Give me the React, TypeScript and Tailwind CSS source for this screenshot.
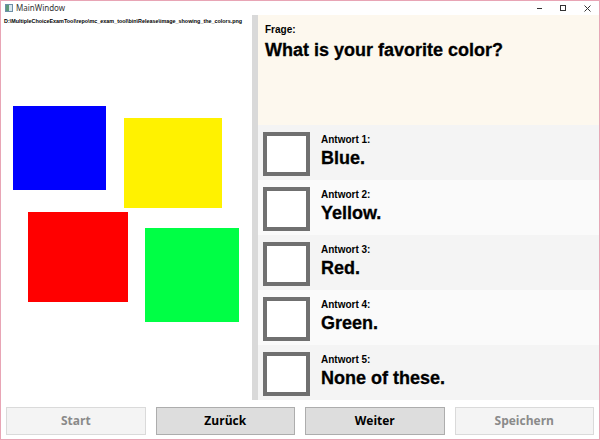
import React from "react";

const answers = ["Blue.", "Yellow.", "Red.", "Green.", "None of these."];

function ColorImage() {
  // the loaded picture: four coloured squares on white
  return (
    <svg width="251" height="330" viewBox="0 0 251 330" className="block">
      <rect x="12" y="76" width="93" height="84" fill="#0000ff" />
      <rect x="123" y="88" width="98" height="90" fill="#fff200" />
      <rect x="27" y="182" width="100" height="90" fill="#ff0000" />
      <rect x="144" y="198" width="94" height="94" fill="#00ff45" />
    </svg>
  );
}

export default function App() {
  return (
    <div
      className="w-[600px] h-[440px] border border-[#e8a5b5] bg-white flex flex-col overflow-hidden"
      style={{ fontFamily: '"Liberation Sans", Arial, sans-serif' }}
    >
      {/* Title bar */}
      <div className="h-[14px] flex items-center justify-between bg-white">
        <div className="flex items-center gap-[3px] pl-[4px]">
          <div className="w-[8px] h-[8px] border border-[#6d8fa8] bg-[#d8e6ee] flex">
            <div className="w-[3px] h-full bg-[#5d9a7a]" />
          </div>
          <span className="text-[8px] text-[#333]" style={{ fontFamily: '"Noto Sans", sans-serif' }}>
            MainWindow
          </span>
        </div>
        <div className="flex items-center h-full">
          <div className="w-[24px] h-full flex items-center justify-center">
            <div className="w-[5px] h-px bg-[#333]" />
          </div>
          <div className="w-[24px] h-full flex items-center justify-center">
            <div className="w-[6px] h-[6px] border border-[#333]" />
          </div>
          <div className="w-[24px] h-full flex items-center justify-center">
            <svg width="7" height="7" viewBox="0 0 7 7">
              <path d="M0.5 0.5 L6.5 6.5 M6.5 0.5 L0.5 6.5" stroke="#333" strokeWidth="1" />
            </svg>
          </div>
        </div>
      </div>

      {/* Main area */}
      <div className="h-[385px] flex">
        <div className="w-[251px] flex flex-col">
          <div className="h-[15px] pl-[3px] pt-[4px] text-[5.4px] font-bold leading-none text-black whitespace-nowrap">
            D:\MultipleChoiceExamTool\repo\mc_exam_tool\bin\Release\image_showing_the_colors.png
          </div>
          <ColorImage />
        </div>
        <div className="w-[6px] bg-[#d9d9d9]" />
        <div className="flex-1 flex flex-col">
          <div className="h-[110px] bg-[#fdf8ee] px-[7px] pt-[10px]">
            <div className="text-[10px] font-bold leading-none text-black">Frage:</div>
            <div className="mt-[6px] text-[18px] font-bold leading-none text-black [-webkit-text-stroke:0.3px_black]">
              What is your favorite color?
            </div>
          </div>
          {answers.map((a, i) => (
            <div
              key={i}
              className={`h-[55px] flex items-start gap-[11px] pl-[5px] pt-[7px] ${
                i % 2 === 0 ? "bg-[#f4f4f4]" : "bg-[#fafafa]"
              }`}
            >
              <div className="w-[47px] h-[44px] border-[4px] border-[#707070] bg-white shrink-0" />
              <div className="flex flex-col pt-[3px]">
                <span className="text-[10px] font-bold leading-none text-black">Antwort {i + 1}:</span>
                <span className="mt-[4px] text-[18px] font-bold leading-none text-black [-webkit-text-stroke:0.3px_black]">
                  {a}
                </span>
              </div>
            </div>
          ))}
        </div>
      </div>

      {/* Buttons */}
      <div
        className="flex-1 grid grid-cols-4 gap-[10px] px-[5px] pt-[7px] pb-[4px]"
        style={{ fontFamily: '"Open Sans", sans-serif' }}
      >
        <button className="h-[28px] border border-[#dadada] bg-[#f4f4f4] text-[12px] font-bold text-[#8a8a8a]">
          Start
        </button>
        <button className="h-[28px] border border-[#adadad] bg-[#dddddd] text-[12px] font-bold text-black">
          Zurück
        </button>
        <button className="h-[28px] border border-[#adadad] bg-[#dddddd] text-[12px] font-bold text-black">
          Weiter
        </button>
        <button className="h-[28px] border border-[#dadada] bg-[#f4f4f4] text-[12px] font-bold text-[#8a8a8a]">
          Speichern
        </button>
      </div>
    </div>
  );
}
